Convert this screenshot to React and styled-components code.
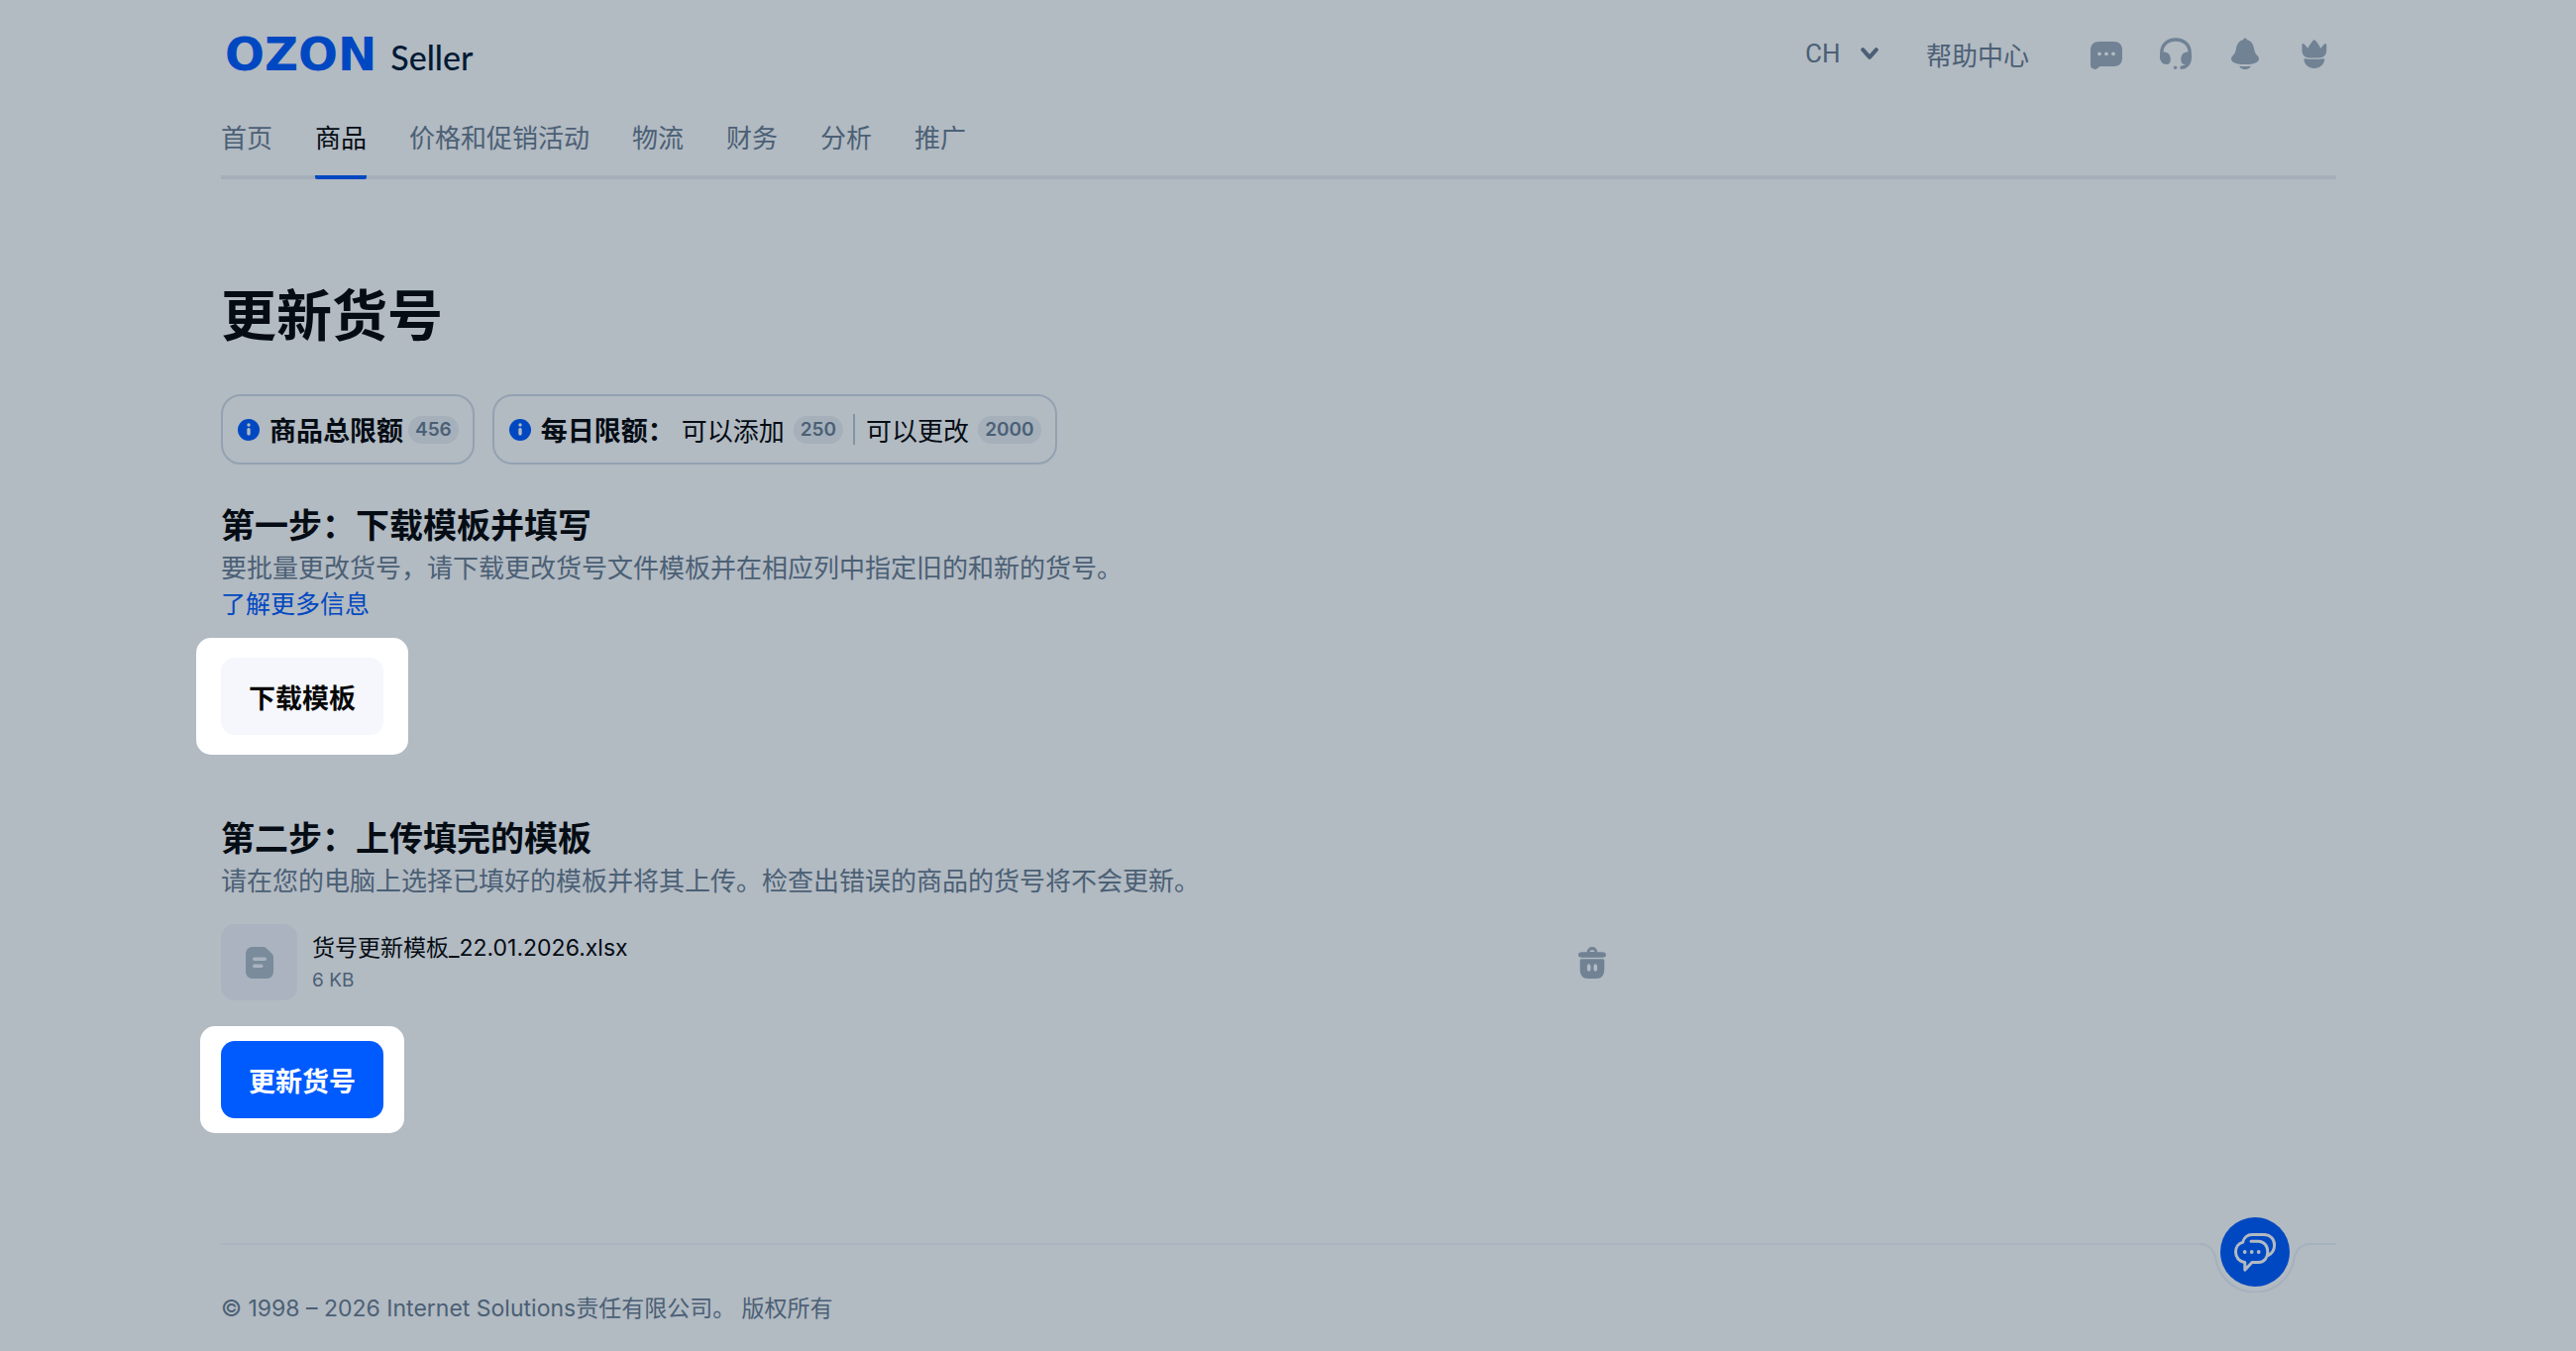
import React, { useState } from 'react';
import styled, { createGlobalStyle } from 'styled-components';

const GlobalStyle = createGlobalStyle`
  * {
    box-sizing: border-box;
  }
  body {
    margin: 0;
    background: #b2bac2;
    color: #050c14;
    font-family: Inter, "Noto Sans CJK SC", sans-serif;
    font-size: 26px;
  }
  button, select {
    font-family: inherit;
    font-size: inherit;
    color: inherit;
    border: 0;
    padding: 0;
    background: none;
  }
  button {
    cursor: pointer;
  }
  a {
    text-decoration: none;
  }
  h1, h2, p {
    margin: 0;
  }
  svg {
    display: block;
    flex: none;
  }
`

const Page = styled.div`
  min-height: 100vh;
  padding: 0 242px 0 223px;
`

const TopBar = styled.header`
  display: flex;
  align-items: center;
  justify-content: space-between;
  height: 108px;
  padding: 0 6px 0 4px;
`

const Logo = styled.a`
  display: flex;
  align-items: baseline;
  gap: 14px;
  padding-top: 4px;
  font-family: "DejaVu Sans", sans-serif;
  font-size: 47px;
  font-weight: 700;
  line-height: 60px;
  color: #0048c1;
`

const LogoSuffix = styled.span`
  font-family: Lato, sans-serif;
  font-size: 34px;
  font-weight: 500;
  color: #001a34;
`

const Tools = styled.div`
  display: flex;
  align-items: center;
  color: #4b6075;
`

const LangLabel = styled.label`
  display: flex;
  align-items: center;
  gap: 20px;
  margin-right: 48px;
`

const LangSelect = styled.select`
  appearance: none;
  outline: none;
  font-family: Roboto, sans-serif;
`

const HelpLink = styled.a`
  color: inherit;
  margin-right: 62px;
`

const IconRow = styled.div`
  display: flex;
  gap: 38px;
`

const IconButton = styled.button`
  color: #708294;
`

const Nav = styled.nav`
  display: flex;
  gap: 43px;
  border-bottom: 4px solid #a4afba;
`

const NavTab = styled.a`
  line-height: 64px;
  padding-bottom: 5px;
  margin-bottom: -4px;
  color: ${props => (props.$active ? '#050c14' : '#4b6075')};
  border-bottom: 4px solid ${props => (props.$active ? '#0048c1' : 'transparent')};
  border-radius: 2px;
`

const Title = styled.h1`
  margin-top: 104px;
  font-size: 56px;
  font-weight: 700;
  line-height: 68px;
`

const Limits = styled.div`
  display: flex;
  gap: 18px;
  margin-top: 45px;
`

const Limit = styled.div`
  display: flex;
  align-items: center;
  height: 71px;
  padding: 0 14px 0 15px;
  border: 2px solid #93a2b1;
  border-radius: 20px;
`

const LimitName = styled.span`
  margin-left: 10px;
  font-size: 27px;
  font-weight: 700;
`

const LimitText = styled.span`
  margin-left: ${props => (props.$wide ? '11px' : '7px')};
`

const Badge = styled.span`
  margin-left: ${props => (props.$wide ? '9px' : '5px')};
  padding: 0 7px;
  border-radius: 14px;
  background: #a5b0bb;
  color: #4b6075;
  font-size: 19px;
  font-weight: 600;
  line-height: 28px;
`

const Divider = styled.span`
  width: 2px;
  height: 31px;
  margin-left: 10px;
  background: #8395a7;
`

const Step = styled.section`
  margin-top: ${props => props.$top}px;
`

const StepTitle = styled.h2`
  font-size: 34px;
  font-weight: 700;
  line-height: 44px;
`

const Hint = styled.p`
  line-height: 42px;
  color: #4b6075;
`

const MoreLink = styled.a`
  display: block;
  width: fit-content;
  font-size: 25px;
  line-height: 30px;
  color: #0048c1;
`

const Spotlight = styled.div`
  width: fit-content;
  margin-top: ${props => props.$top}px;
  margin-left: -${props => props.$x}px;
  padding: ${props => props.$y}px ${props => props.$x}px;
  border-radius: 15px;
  background: #fff;
`

const Button = styled.button`
  display: block;
  height: 78px;
  padding: 0 28px;
  border-radius: 14px;
  font-size: 27px;
  font-weight: 700;
  background: ${props => (props.$primary ? '#005bff' : '#f5f7fc')};
  color: ${props => (props.$primary ? '#fff' : '#070707')};
`

const FileRow = styled.div`
  display: flex;
  align-items: center;
  max-width: 1400px;
  margin-top: 22px;
`

const FileThumb = styled.div`
  display: flex;
  align-items: center;
  justify-content: center;
  width: 77px;
  height: 77px;
  border-radius: 14px;
  background: #abb3c0;
  color: #7a8b9c;
`

const FileInfo = styled.div`
  flex: 1;
  margin-left: 15px;
`

const FileName = styled.div`
  font-size: 23px;
  line-height: 36px;
`

const FileSize = styled.div`
  font-size: 19px;
  line-height: 30px;
  color: #4b6075;
`

const Footer = styled.footer`
  margin-top: 111px;
`

const FooterLine = styled.div`
  display: flex;
  align-items: flex-start;
`

const Line = styled.div`
  flex: ${props => (props.$end ? '0 0 26px' : '1')};
  height: 2px;
  background: ${props => (props.$end ? '#a5b1bd' : '#abb4c1')};
`

const Notch = styled.div`
  position: relative;
`

const ChatButton = styled.button`
  position: absolute;
  top: -26px;
  left: 21px;
  width: 70px;
  height: 70px;
  border-radius: 50%;
  background: #0048c1;
  color: #b2bac2;
`

const Copyright = styled.p`
  font-size: 23px;
  line-height: 32px;
  color: #4b6075;
`

const tabs = ['首页', '商品', '价格和促销活动', '物流', '财务', '分析', '推广']

const ChevronIcon = () => (
  <svg width="18" height="14" viewBox="0 0 18 14" fill="none" stroke="currentColor" strokeWidth="4" strokeLinecap="round" strokeLinejoin="round">
    <path d="M2.2 3.2 9 10.8l6.800-7.600" />
  </svg>
)

const ChatIcon = () => (
  <svg width="32" height="32" viewBox="0 0 32 32" fill="currentColor">
    <path d="M9 4h14c6 0 9 3 9 9v7c0 6-3 9-9 9H9.500l-2.500 2C5 32.600 0 32.500 0 27V13c0-6 3-9 9-9z" />
    <g fill="#b2bac2">
      <circle cx="9" cy="16.300" r="1.900" />
      <circle cx="16" cy="16.300" r="1.900" />
      <circle cx="23" cy="16.300" r="1.900" />
    </g>
  </svg>
)

const HeadsetIcon = () => (
  <svg width="32" height="32" viewBox="0 0 32 32" fill="currentColor">
    <path d="M1.800 20v-4.500C1.800 7 8 2 16 2s14.200 5 14.200 13.500V20c0 6-3 9.500-8.200 10.300" fill="none" stroke="currentColor" strokeWidth="3.400" strokeLinecap="round" />
    <path d="M0 19c0-3 2-4.600 4.500-4.600 4 0 6.300 3.600 6.300 7.600 0 3-1.400 5-4.300 5C2.500 27 0 23.500 0 19z" />
    <path d="M32 19c0-3-2-4.600-4.500-4.600-4 0-6.300 3.600-6.300 7.600 0 3 1.400 5 4.300 5C29.500 27 32 23.500 32 19z" />
    <circle cx="15.600" cy="30.200" r="1.700" />
  </svg>
)

const BellIcon = () => (
  <svg width="32" height="32" viewBox="0 0 32 32" fill="currentColor">
    <path d="M16 .6c1 0 1.600.6 2 1.600 4.500 1 6.300 4.500 7.300 10 .6 3 1.400 4 2.700 5.500 1.500 1.600 2 2.600 2 4C30 24.700 25 27 16 27S2 24.700 2 21.700c0-1.400.5-2.400 2-4 1.300-1.500 2.100-2.500 2.700-5.500 1-5.500 2.800-9 7.300-10 .4-1 1-1.600 2-1.600z" />
    <path d="M11 28.800c3.500.4 6.500.4 10 0 .6 0 .7.300.4.800-1 1.700-3 2.500-5.400 2.500s-4.400-.8-5.400-2.500c-.3-.5-.2-.8.4-.8z" />
  </svg>
)

const TulipIcon = () => (
  <svg width="32" height="32" viewBox="0 0 32 32" fill="currentColor">
    <path d="M5.600 6.500C6.800 7.600 8.200 9 9.200 11c1.400-2.700 3-5.400 5.300-7.900.9-1 1.700-1 2.600 0 2.300 2.500 3.900 5.200 5.300 7.900 1-2 2.400-3.400 3.600-4.500 1.200-1 2.200-.6 2.200 1V12c0 5.500-2.500 8-6.400 8.200-4 .3-8 .3-12 0C5.900 20 3.400 17.500 3.400 12V7.500c0-1.600 1-2 2.200-1z" />
    <path d="M6.300 21.200c6.300.8 12.700.8 19 0 .7 0 1 .4.900 1.100-.7 5.400-4.600 8.600-10.400 8.600S6.100 27.700 5.400 22.300c-.1-.7.2-1.100.9-1.100z" />
  </svg>
)

const InfoIcon = () => (
  <svg width="22" height="22" viewBox="0 0 22 22">
    <circle cx="11" cy="11" r="11" fill="#0048c1" />
    <circle cx="11" cy="6" r="1.700" fill="#b2bac2" />
    <rect x="9.300" y="9" width="3.400" height="7.600" rx="1.500" fill="#b2bac2" />
  </svg>
)

const FileIcon = () => (
  <svg width="28" height="32" viewBox="0 0 28 32" fill="currentColor">
    <path d="M8 0h9c2 0 3 .6 4.200 1.700l5 4.800C27.500 7.800 28 9 28 11v13c0 5.500-2.500 8-8 8H8c-5.500 0-8-2.500-8-8V8c0-5.500 2.500-8 8-8z" />
    <g fill="#abb3c0">
      <rect x="7" y="10.400" width="14" height="3.600" rx="1.800" />
      <rect x="7" y="17.400" width="10.500" height="3.600" rx="1.800" />
    </g>
  </svg>
)

const TrashIcon = () => (
  <svg width="32" height="32" viewBox="0 0 32 32" fill="currentColor">
    <path fillRule="evenodd" d="M10.600 5.300C11 2 13 0 16 0s5 2 5.400 5.300h5.100c2.200 0 3.500.8 3.500 2.700s-1.300 2.700-3.500 2.700h-21C3.300 10.700 2 9.900 2 8s1.300-2.700 3.500-2.700h5.100zm2.900-.4h5c0-1-1-1.700-2.500-1.700s-2.500.7-2.500 1.700z" />
    <path fillRule="evenodd" d="M5.500 12.200h21c1.200 0 1.800.6 1.800 1.800V22c0 7-3 10-8.300 10h-8c-5.300 0-8.300-3-8.300-10v-8c0-1.200.6-1.800 1.800-1.800zm7.200 5c-1.200 0-1.900 1.300-1.900 3.700s.7 3.800 1.900 3.800 1.900-1.300 1.900-3.800-.7-3.700-1.900-3.700zm6.600 0c-1.200 0-1.900 1.300-1.900 3.700s.7 3.800 1.900 3.800 1.900-1.300 1.900-3.800-.7-3.700-1.900-3.700z" />
  </svg>
)

const DialogIcon = () => (
  <svg width="70" height="70" viewBox="0 0 70 70" fill="none" stroke="currentColor" strokeWidth="3" strokeLinecap="round" strokeLinejoin="round">
    <path d="M31 24.300h7.500c5.500 0 9.300 4.600 9.300 10.600s-3.800 10.600-9.300 10.600H32l-7.200 7.700v-7.700c-5.600-.6-9.300-5-9.300-10.600 0-5 3-8.700 7.200-9.700C23.700 20.500 27.500 17.500 32 17.500h12c6.500 0 10.600 4.500 10.600 10.500 0 5-2.400 8.600-6.600 10.600" />
    <g fill="currentColor" stroke="none">
      <circle cx="24.700" cy="35" r="1.900" />
      <circle cx="31.700" cy="35" r="1.900" />
      <circle cx="38.700" cy="35" r="1.900" />
    </g>
  </svg>
)

const headerIcons = [
  { name: '消息', Icon: ChatIcon },
  { name: '客服', Icon: HeadsetIcon },
  { name: '通知', Icon: BellIcon },
  { name: '账户', Icon: TulipIcon }
]

const App = () => {
  const [active, setActive] = useState('商品')

  return (
    <Page>
      <GlobalStyle />
      <TopBar>
        <Logo href="#">
          OZON
          <LogoSuffix>Seller</LogoSuffix>
        </Logo>
        <Tools>
          <LangLabel>
            <LangSelect aria-label="语言">
              <option>CH</option>
            </LangSelect>
            <ChevronIcon />
          </LangLabel>
          <HelpLink href="#">帮助中心</HelpLink>
          <IconRow>
            {headerIcons.map(({ name, Icon }) => (
              <IconButton key={name} aria-label={name}><Icon /></IconButton>
            ))}
          </IconRow>
        </Tools>
      </TopBar>
      <Nav>
        {tabs.map(tab => (
          <NavTab key={tab} href="#" $active={tab === active} onClick={() => setActive(tab)}>{tab}</NavTab>
        ))}
      </Nav>

      <main>
        <Title>更新货号</Title>
        <Limits>
          <Limit>
            <InfoIcon />
            <LimitName>商品总限额</LimitName>
            <Badge>456</Badge>
          </Limit>
          <Limit>
            <InfoIcon />
            <LimitName>每日限额：</LimitName>
            <LimitText>可以添加</LimitText>
            <Badge $wide>250</Badge>
            <Divider />
            <LimitText $wide>可以更改</LimitText>
            <Badge $wide>2000</Badge>
          </Limit>
        </Limits>

        <Step $top={40}>
          <StepTitle>第一步：下载模板并填写</StepTitle>
          <Hint>要批量更改货号，请下载更改货号文件模板并在相应列中指定旧的和新的货号。</Hint>
          <MoreLink href="#">了解更多信息</MoreLink>
          <Spotlight $top={19} $x={25} $y={20}>
            <Button>下载模板</Button>
          </Spotlight>
        </Step>

        <Step $top={63}>
          <StepTitle>第二步：上传填完的模板</StepTitle>
          <Hint>请在您的电脑上选择已填好的模板并将其上传。检查出错误的商品的货号将不会更新。</Hint>
          <FileRow>
            <FileThumb><FileIcon /></FileThumb>
            <FileInfo>
              <FileName>货号更新模板_22.01.2026.xlsx</FileName>
              <FileSize>6 KB</FileSize>
            </FileInfo>
            <IconButton aria-label="删除"><TrashIcon /></IconButton>
          </FileRow>
          <Spotlight $top={26} $x={21} $y={15}>
            <Button $primary>更新货号</Button>
          </Spotlight>
        </Step>
      </main>

      <Footer>
        <FooterLine>
          <Line />
          <Notch>
            <svg width="112" height="50" viewBox="0 0 112 50" fill="none" stroke="#a5b1bd" strokeWidth="2">
              <path d="M0 1C10 1 15 8 16.500 16A40 40 0 0 0 95.500 16C97 8 102 1 112 1" />
            </svg>
            <ChatButton aria-label="在线咨询"><DialogIcon /></ChatButton>
          </Notch>
          <Line $end />
        </FooterLine>
        <Copyright>© 1998 – 2026 Internet Solutions责任有限公司。 版权所有</Copyright>
      </Footer>
    </Page>
  );
}

export default App;
